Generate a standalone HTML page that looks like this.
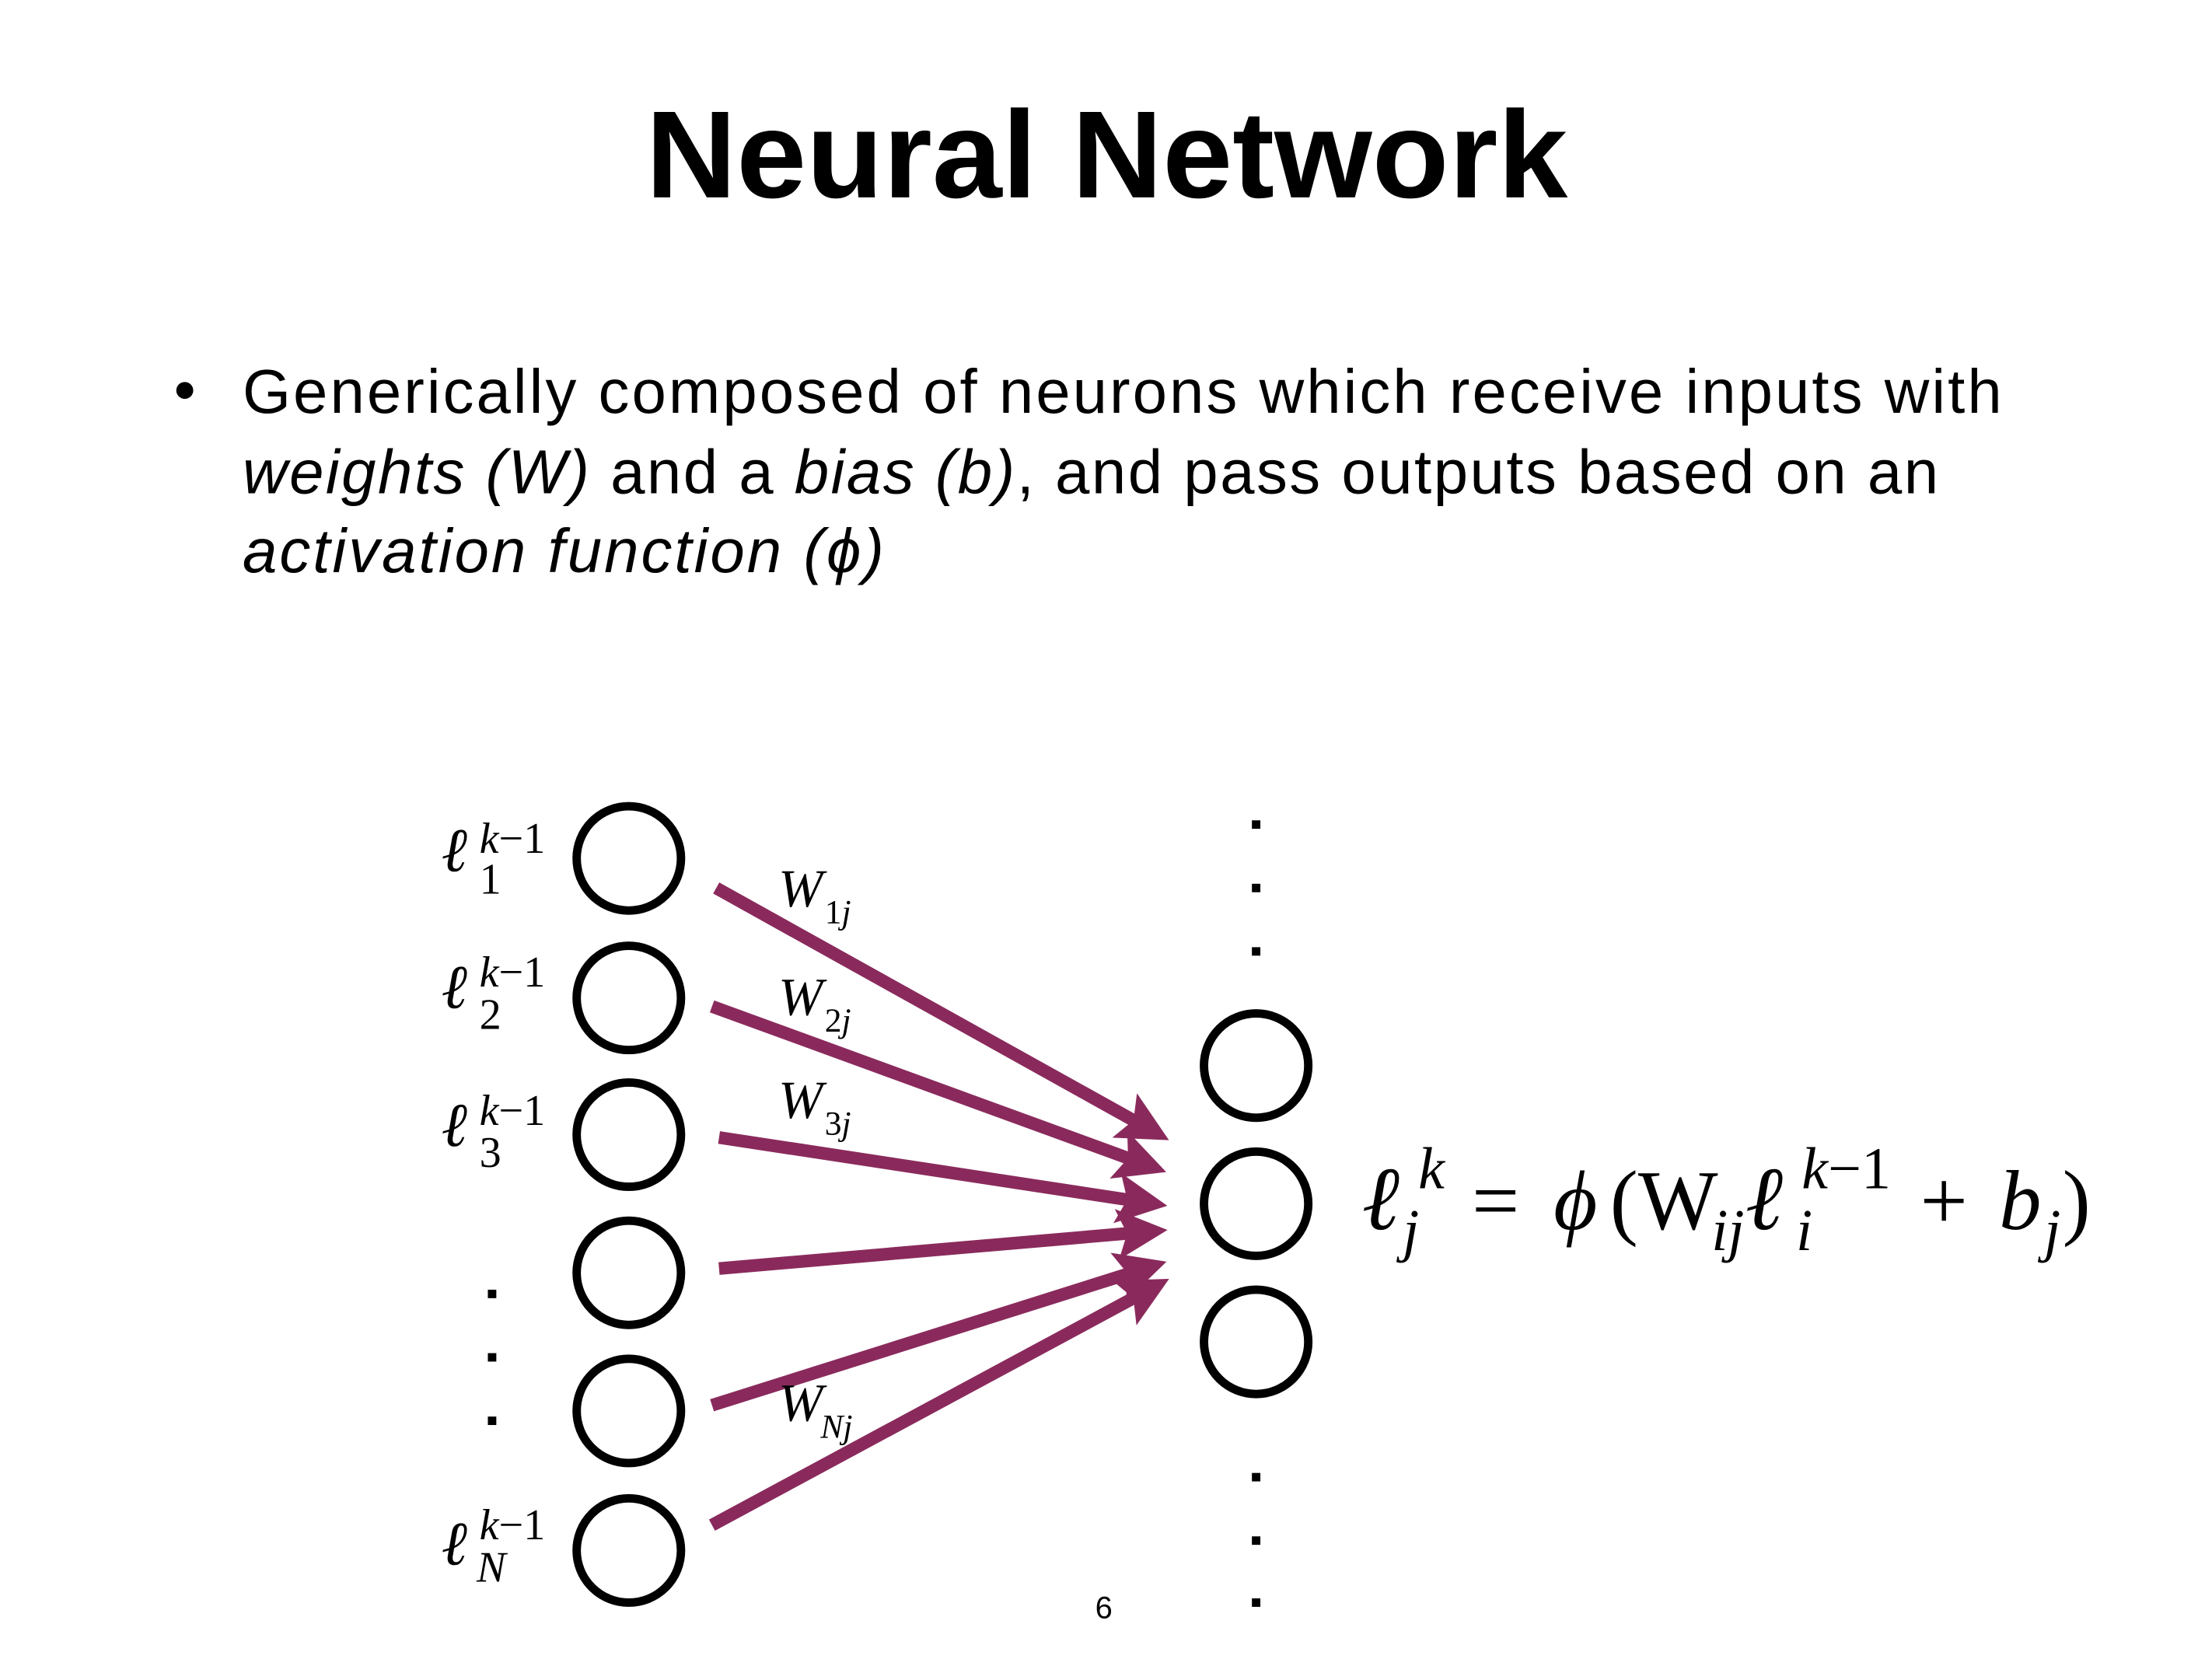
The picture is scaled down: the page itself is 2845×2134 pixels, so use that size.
<!DOCTYPE html>
<html><head><meta charset="utf-8"><style>
html,body{margin:0;padding:0;background:#fff;}
svg{display:block;}
.s{font-family:"Liberation Sans",sans-serif;}
.m{font-family:"Liberation Serif",serif;font-style:italic;}
.r{font-family:"Liberation Serif",serif;}
</style></head><body>
<svg width="2845" height="2134" viewBox="0 0 1569 1177" xmlns="http://www.w3.org/2000/svg">
<defs>
<marker id="a" markerWidth="4" markerHeight="4" refX="2.2" refY="2" orient="auto" markerUnits="strokeWidth">
<path d="M0,0 L4,2 L0,4 L0.8,2 Z" fill="#8a2a5c"/></marker>
</defs>
<text class="s" x="458" y="140" font-size="88" font-weight="bold" textLength="654" lengthAdjust="spacingAndGlyphs" fill="#000">Neural Network</text>
<circle cx="131" cy="277" r="6" fill="#000"/>
<g class="s" font-size="44" fill="#000">
<text x="172" y="293" textLength="1248">Generically composed of neurons which receive inputs with</text>
<text x="172" y="350" textLength="1203"><tspan font-style="italic">weights (W)</tspan> and a <tspan font-style="italic">bias (b)</tspan>, and pass outputs based on an</text>
<text x="172" y="406" font-style="italic" textLength="455">activation function (ϕ)</text>
</g>
<g fill="none" stroke="#000" stroke-width="6">
<circle cx="446" cy="609" r="37"/><circle cx="446" cy="708" r="37"/><circle cx="446" cy="805" r="37"/>
<circle cx="446" cy="903" r="37"/><circle cx="446" cy="1001" r="37"/><circle cx="446" cy="1100" r="37"/>
<circle cx="891" cy="756" r="37"/><circle cx="891" cy="854" r="37"/><circle cx="891" cy="952" r="37"/>
</g>
<g fill="#000">
<rect x="888" y="582" width="6" height="6"/><rect x="888" y="627" width="6" height="6"/><rect x="888" y="672" width="6" height="6"/>
<rect x="888" y="1045" width="6" height="6"/><rect x="888" y="1090" width="6" height="6"/><rect x="888" y="1134" width="6" height="6"/>
<rect x="346" y="915" width="6" height="6"/><rect x="346" y="960" width="6" height="6"/><rect x="346" y="1005" width="6" height="6"/>
</g>
<g stroke="#8a2a5c" stroke-width="9" marker-end="url(#a)">
<line x1="508" y1="630" x2="815" y2="801"/>
<line x1="505" y1="714" x2="812" y2="826"/>
<line x1="510" y1="807" x2="812" y2="853"/>
<line x1="510" y1="900" x2="812" y2="874"/>
<line x1="505" y1="997" x2="812" y2="900"/>
<line x1="505" y1="1082" x2="815" y2="915"/>
</g>
<g fill="#000">
<g class="m" font-size="44">
<text x="313" y="618">ℓ</text><text x="313" y="715">ℓ</text><text x="313" y="813">ℓ</text><text x="313" y="1110">ℓ</text>
</g>
<g font-size="31">
<text x="340" y="605"><tspan class="m">k</tspan><tspan class="r">−1</tspan></text>
<text x="340" y="700"><tspan class="m">k</tspan><tspan class="r">−1</tspan></text>
<text x="340" y="798"><tspan class="m">k</tspan><tspan class="r">−1</tspan></text>
<text x="340" y="1092"><tspan class="m">k</tspan><tspan class="r">−1</tspan></text>
<text class="r" x="340" y="634">1</text><text class="r" x="340" y="730">2</text><text class="r" x="340" y="828">3</text>
<text class="m" x="338" y="1122">N</text>
</g>
<g font-size="38">
<text class="m" x="552" y="643">W</text><text class="r" x="585" y="655" font-size="24">1<tspan class="m">j</tspan></text>
<text class="m" x="552" y="720">W</text><text class="r" x="585" y="732" font-size="24">2<tspan class="m">j</tspan></text>
<text class="m" x="552" y="793">W</text><text class="r" x="585" y="805" font-size="24">3<tspan class="m">j</tspan></text>
<text class="m" x="552" y="1008">W</text><text class="m" x="582" y="1020" font-size="24">Nj</text>
</g>
<g font-size="60">
<text class="m" x="966" y="872" font-size="64">ℓ</text>
<text class="m" x="1006" y="843" font-size="42">k</text>
<text class="m" x="995" y="887" font-size="42">j</text>
<text class="r" x="1044" y="872">=</text>
<text class="m" x="1102" y="872">ϕ</text>
<text class="r" x="1142" y="872">(W</text>
<text class="m" x="1214" y="887" font-size="42">ij</text>
<text class="m" x="1238" y="872" font-size="64">ℓ</text>
<text x="1278" y="843" font-size="42"><tspan class="m">k</tspan><tspan class="r">−1</tspan></text>
<text class="m" x="1274" y="887" font-size="42">i</text>
<text class="r" x="1362" y="872">+</text>
<text class="m" x="1418" y="872">b</text>
<text class="m" x="1450" y="887" font-size="42">j</text>
<text class="r" x="1463" y="872">)</text>
</g>
<text class="s" x="783" y="1148" font-size="22" text-anchor="middle">6</text>
</g>
</svg>
</body></html>
